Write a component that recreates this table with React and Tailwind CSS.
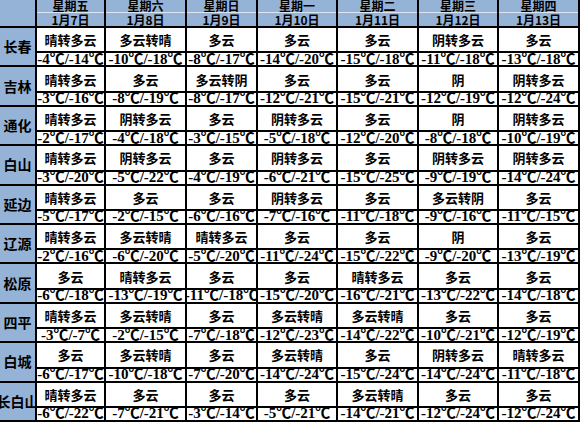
import React from "react";

const days = [
  ["星期五", "1月7日"],
  ["星期六", "1月8日"],
  ["星期日", "1月9日"],
  ["星期一", "1月10日"],
  ["星期二", "1月11日"],
  ["星期三", "1月12日"],
  ["星期四", "1月13日"],
];

const cities = [
  {
    name: "长春",
    weather: ["晴转多云", "多云转晴", "多云", "多云", "多云", "阴转多云", "多云"],
    temps: ["-4℃/-14℃", "-10℃/-18℃", "-8℃/-17℃", "-14℃/-20℃", "-15℃/-18℃", "-11℃/-18℃", "-13℃/-18℃"],
  },
  {
    name: "吉林",
    weather: ["晴转多云", "多云", "多云转阴", "多云", "多云", "阴", "阴转多云"],
    temps: ["-3℃/-16℃", "-8℃/-19℃", "-8℃/-17℃", "-12℃/-21℃", "-15℃/-21℃", "-12℃/-19℃", "-12℃/-24℃"],
  },
  {
    name: "通化",
    weather: ["晴转多云", "阴转多云", "多云", "阴转多云", "多云", "阴", "阴转多云"],
    temps: ["-2℃/-17℃", "-4℃/-18℃", "-3℃/-15℃", "-5℃/-18℃", "-12℃/-20℃", "-8℃/-18℃", "-10℃/-19℃"],
  },
  {
    name: "白山",
    weather: ["晴转多云", "阴转多云", "多云", "阴转多云", "多云", "阴转多云", "阴转多云"],
    temps: ["-3℃/-20℃", "-5℃/-22℃", "-4℃/-19℃", "-6℃/-21℃", "-15℃/-25℃", "-9℃/-19℃", "-14℃/-24℃"],
  },
  {
    name: "延边",
    weather: ["晴转多云", "多云", "多云", "阴转多云", "多云", "多云转阴", "多云"],
    temps: ["-5℃/-17℃", "-2℃/-15℃", "-6℃/-16℃", "-7℃/-16℃", "-11℃/-18℃", "-9℃/-16℃", "-11℃/-15℃"],
  },
  {
    name: "辽源",
    weather: ["晴转多云", "多云转晴", "晴转多云", "多云", "多云", "阴", "多云"],
    temps: ["-2℃/-16℃", "-6℃/-20℃", "-5℃/-20℃", "-11℃/-24℃", "-15℃/-22℃", "-9℃/-20℃", "-13℃/-19℃"],
  },
  {
    name: "松原",
    weather: ["多云", "晴转多云", "多云", "多云", "晴转多云", "多云", "多云"],
    temps: ["-6℃/-18℃", "-13℃/-19℃", "-11℃/-18℃", "-15℃/-20℃", "-16℃/-21℃", "-13℃/-22℃", "-14℃/-18℃"],
  },
  {
    name: "四平",
    weather: ["晴转多云", "多云转晴", "多云", "多云转晴", "多云转晴", "多云", "多云"],
    temps: ["-3℃/-7℃", "-2℃/-15℃", "-7℃/-18℃", "-12℃/-23℃", "-14℃/-22℃", "-10℃/-21℃", "-12℃/-19℃"],
  },
  {
    name: "白城",
    weather: ["多云", "多云转晴", "多云", "多云转晴", "多云", "阴转多云", "晴转多云"],
    temps: ["-6℃/-17℃", "-10℃/-18℃", "-7℃/-20℃", "-14℃/-24℃", "-15℃/-24℃", "-14℃/-24℃", "-11℃/-18℃"],
  },
  {
    name: "长白山",
    weather: ["晴转多云", "多云", "多云", "多云", "多云转晴", "多云", "多云"],
    temps: ["-6℃/-22℃", "-7℃/-21℃", "-3℃/-14℃", "-5℃/-21℃", "-14℃/-21℃", "-12℃/-24℃", "-12℃/-24℃"],
  },
];

const cjk = "font-['Noto_Sans_CJK_SC',sans-serif]";
const temp = "font-['Liberation_Serif','Noto_Sans_CJK_SC',serif]";

export default function App() {
  return (
    <div className="w-[583px] h-[422px] bg-white overflow-hidden">
      <div className="grid w-max grid-cols-[35px_67px_79px_69px_78px_79px_78px_79px] grid-rows-[26px_repeat(20,minmax(0,auto))] gap-[2px] bg-black pr-[2px] pb-[2px]">
        <div className="bg-[#95b3d7]" />
        {days.map(([d, date]) => (
          <div key={date} className={`flex flex-col bg-[#95b3d7] font-bold text-black ${cjk}`}>
            <div className="flex h-[13px] items-center justify-center overflow-hidden border-b border-[#dce6f1] text-[12px] leading-none">
              {d}
            </div>
            <div className="flex h-[13px] items-center justify-center overflow-hidden text-[12px] leading-none">
              {date}
            </div>
          </div>
        ))}

        {cities.map((c) => (
          <React.Fragment key={c.name}>
            <div
              className={`row-span-2 flex items-center justify-center overflow-hidden whitespace-nowrap bg-[#95b3d7] text-[14px] font-bold text-black ${cjk}`}
            >
              {c.name}
            </div>
            {c.weather.map((w, i) => (
              <div
                key={"w" + i}
                className={`flex h-[23.4px] items-center justify-center overflow-hidden whitespace-nowrap bg-white text-[13px] font-bold leading-none text-black ${cjk}`}
              >
                {w}
              </div>
            ))}
            {c.temps.map((t, i) => (
              <div
                key={"t" + i}
                className={`flex h-[12px] items-center justify-center overflow-hidden whitespace-nowrap bg-white text-[15px] font-bold leading-none text-black ${temp}`}
              >
                {t}
              </div>
            ))}
          </React.Fragment>
        ))}
      </div>
    </div>
  );
}
